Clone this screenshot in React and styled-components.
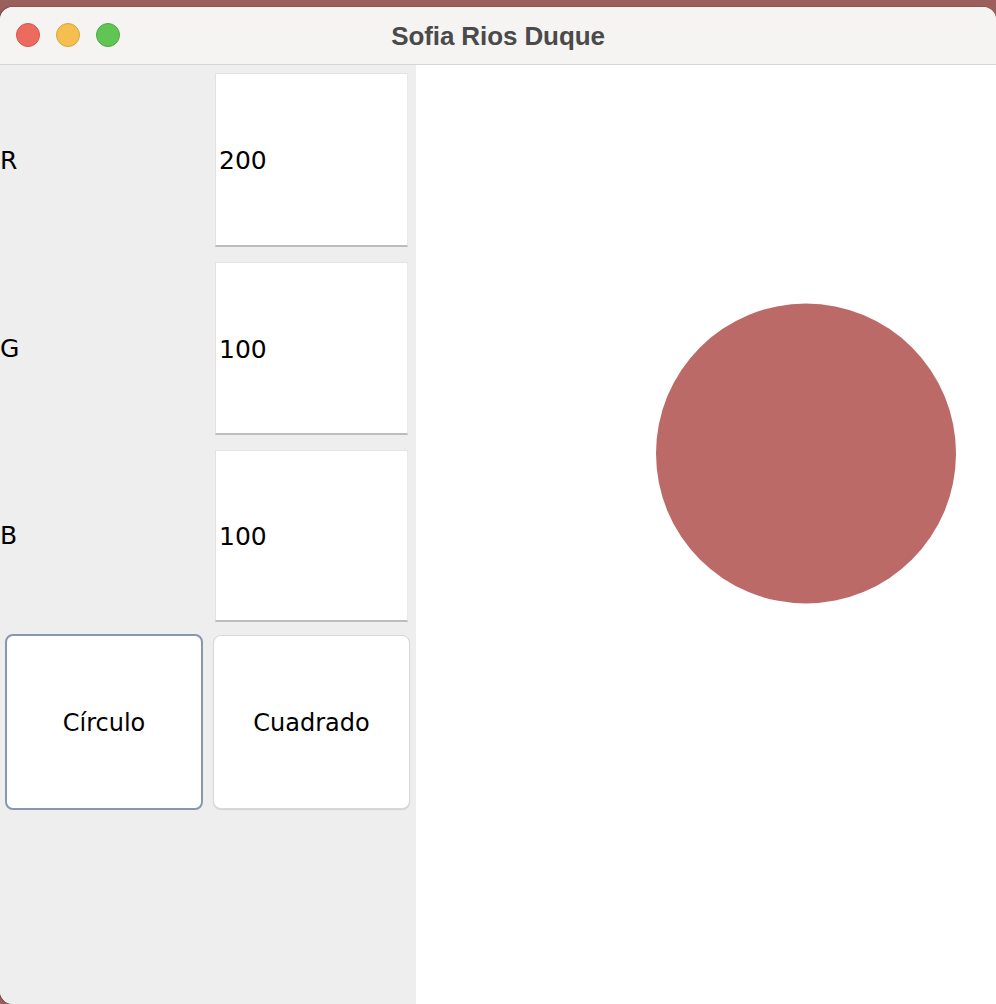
import React, { useState } from "react";
import styled, { createGlobalStyle } from "styled-components";

const GlobalStyle = createGlobalStyle`
  html, body {
    margin: 0;
    padding: 0;
    background: #9b5f5c;
    overflow: hidden;
  }
  #root {
    height: 1004px;
  }
`;

const Window = styled.div`
  margin-top: 7px;
  height: 997px;
  display: flex;
  flex-direction: column;
  border-radius: 13px 13px 0 13px;
  overflow: hidden;
  background: #ffffff;
  box-shadow: -1px 0 2px rgba(0, 0, 0, 0.35);
`;

const TitleBar = styled.div`
  position: relative;
  height: 57px;
  flex: none;
  display: flex;
  align-items: center;
  justify-content: center;
  background: #f5f4f2;
  border-bottom: 1px solid #d6d5d3;
`;

const Lights = styled.div`
  position: absolute;
  left: 16px;
  top: 16px;
  display: flex;
  gap: 16px;
`;

const Light = styled.span`
  width: 22px;
  height: 22px;
  border-radius: 50%;
  background: ${(p) => p.color};
  border: 1px solid ${(p) => p.edge};
`;

const Title = styled.div`
  font-family: "Liberation Sans", Arial, sans-serif;
  font-weight: bold;
  font-size: 26px;
  color: #4a4a4a;
  letter-spacing: -0.1px;
  padding-top: 1px;
`;

const Body = styled.div`
  flex: 1;
  display: grid;
  grid-template-columns: 416px 1fr;
  min-height: 0;
`;

const Panel = styled.div`
  background: #eeeeee;
  display: grid;
  grid-template-columns: 208px 208px;
  grid-template-rows: repeat(5, 1fr);
  font-family: "DejaVu Sans", "Lucida Grande", sans-serif;
  font-size: 25px;
  color: #000;
`;

const Label = styled.div`
  display: flex;
  align-items: center;
  padding-top: 3px;
`;

const FieldCell = styled.div`
  display: flex;
  padding: ${(p) => (p.first ? "8px" : "9px")} 8px 6px 7px;
`;

const Field = styled.input`
  flex: 1;
  min-width: 0;
  box-sizing: border-box;
  border: none;
  border-left: 1px solid #e2e2e2;
  border-top: 1px solid #e4e4e4;
  border-right: 1px solid #e8e8e8;
  border-bottom: 2px solid #bdbdbd;
  background: #ffffff;
  font: inherit;
  color: #000;
  padding: 3px 0 0 3px;
  outline: none;
`;

const ButtonCell = styled.div`
  display: flex;
  padding: ${(p) => p.pad};
`;

const Button = styled.button`
  flex: 1;
  background: #ffffff;
  border-radius: 8px;
  font: inherit;
  font-size: 24px;
  color: #000;
  cursor: pointer;
  padding: 2px 0 0;
  border: ${(p) => (p.focused ? "2px solid #8797ad" : "1px solid #d8d8d8")};
  box-shadow: ${(p) => (p.focused ? "none" : "0 1px 1px rgba(0,0,0,0.12)")};
`;

const Canvas = styled.div`
  background: #ffffff;
  position: relative;
`;

const Drawing = styled.svg`
  position: absolute;
  left: 0;
  top: 0;
`;

export default function App() {
  const [r, setR] = useState("200");
  const [g, setG] = useState("100");
  const [b, setB] = useState("100");

  return (
    <>
      <GlobalStyle />
      <Window>
        <TitleBar>
          <Lights>
            <Light color="#ed6a5e" edge="#d4564b" />
            <Light color="#f5bf4f" edge="#d9a33a" />
            <Light color="#61c554" edge="#4ea843" />
          </Lights>
          <Title>Sofia Rios Duque</Title>
        </TitleBar>
        <Body>
          <Panel>
            <Label>R</Label>
            <FieldCell first>
              <Field value={r} onChange={(e) => setR(e.target.value)} />
            </FieldCell>
            <Label>G</Label>
            <FieldCell>
              <Field value={g} onChange={(e) => setG(e.target.value)} />
            </FieldCell>
            <Label>B</Label>
            <FieldCell>
              <Field value={b} onChange={(e) => setB(e.target.value)} />
            </FieldCell>
            <ButtonCell pad="6px 5px 6px 5px">
              <Button focused>Círculo</Button>
            </ButtonCell>
            <ButtonCell pad="7px 6px 7px 5px">
              <Button>Cuadrado</Button>
            </ButtonCell>
          </Panel>
          <Canvas>
            <Drawing width="580" height="939">
              <circle cx="390" cy="388.5" r="150" fill="#bb6a67" />
            </Drawing>
          </Canvas>
        </Body>
      </Window>
    </>
  );
}
